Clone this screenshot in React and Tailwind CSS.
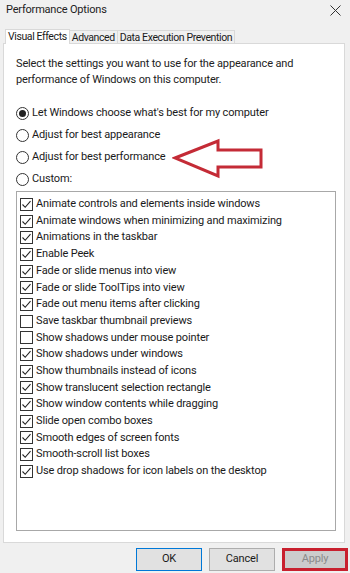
import React from "react";

const effects = [
  ["Animate controls and elements inside windows", true],
  ["Animate windows when minimizing and maximizing", true],
  ["Animations in the taskbar", true],
  ["Enable Peek", true],
  ["Fade or slide menus into view", true],
  ["Fade or slide ToolTips into view", true],
  ["Fade out menu items after clicking", true],
  ["Save taskbar thumbnail previews", false],
  ["Show shadows under mouse pointer", false],
  ["Show shadows under windows", true],
  ["Show thumbnails instead of icons", true],
  ["Show translucent selection rectangle", true],
  ["Show window contents while dragging", true],
  ["Slide open combo boxes", true],
  ["Smooth edges of screen fonts", true],
  ["Smooth-scroll list boxes", true],
  ["Use drop shadows for icon labels on the desktop", true],
];

const radios = [
  ["Let Windows choose what's best for my computer", true],
  ["Adjust for best appearance", false],
  ["Adjust for best performance", false],
  ["Custom:", false],
];

function Radio({ checked }) {
  return (
    <span className="w-[13px] h-[13px] rounded-full border border-[#333] bg-white flex items-center justify-center shrink-0">
      {checked && <span className="w-[7px] h-[7px] rounded-full bg-[#222]" />}
    </span>
  );
}

function Check({ checked }) {
  return (
    <span className="w-[13px] h-[13px] border border-[#333] bg-white flex items-center justify-center shrink-0">
      {checked && (
        <svg width="11" height="11" viewBox="0 0 11 11">
          <path d="M1.5 5.5 L4.2 8.3 L9.5 2.2" fill="none" stroke="#222" strokeWidth="1.1" />
        </svg>
      )}
    </span>
  );
}

export default function App() {
  return (
    <div
      className="relative w-[350px] h-[573px] bg-[#f0f0f0] text-[#1a1a1a] tracking-[-0.15px] overflow-hidden"
      style={{ fontFamily: 'Roboto, "Noto Sans", sans-serif' }}
    >
      {/* title bar */}
      <div className="flex items-center justify-between h-[21px] pl-[6px] pr-[9px]">
        <span className="text-[11px] tracking-[-0.2px] text-[#222]">Performance Options</span>
        <svg width="11" height="11" viewBox="0 0 11 11">
          <path d="M0.5 0.5 L10.5 10.5 M10.5 0.5 L0.5 10.5" stroke="#333" strokeWidth="1" />
        </svg>
      </div>

      {/* tabs */}
      <div className="flex items-end h-[15px] pl-[5px] mt-[7px] text-[10.5px] tracking-[-0.4px]">
        <div className="h-[15px] px-[2px] bg-white border border-b-0 border-[#d9d9d9] leading-[14px] relative z-10 -mb-px">
          Visual Effects
        </div>
        <div className="h-[13px] px-[2px] border border-b-0 border-l-0 border-[#d9d9d9] leading-[13px]">
          Advanced
        </div>
        <div className="h-[13px] px-[2px] border border-b-0 border-l-0 border-[#d9d9d9] leading-[13px]">
          Data Execution Prevention
        </div>
      </div>

      {/* panel */}
      <div className="mx-[3px] w-[342px] h-[500px] bg-white border border-[#d9d9d9] pt-[12px] px-[12px]">
        <p className="text-[11px] leading-[16px] text-[#222]">
          Select the settings you want to use for the appearance and
          <br />
          performance of Windows on this computer.
        </p>

        <div className="mt-[19px] flex flex-col gap-[9px]">
          {radios.map(([label, on]) => (
            <div key={label} className="flex items-center gap-[3px] h-[13px] text-[11px]">
              <Radio checked={on} />
              <span>{label}</span>
            </div>
          ))}
        </div>

        <div className="mt-[5px] w-[320px] h-[340px] border border-[#a8a8a8] pt-[4px] pl-[3px]">
          {effects.map(([label, on]) => (
            <div key={label} className="flex items-center gap-[3px] h-[16.7px] text-[11px]">
              <Check checked={on} />
              <span>{label}</span>
            </div>
          ))}
        </div>
      </div>

      {/* buttons */}
      <div className="flex justify-end gap-[7px] pr-[2px] mt-[5px] text-[11px]">
        <button className="w-[66px] h-[23px] bg-[#e1e1e1] border border-[#0078d7]">OK</button>
        <button className="w-[66px] h-[23px] bg-[#e1e1e1] border border-[#adadad]">Cancel</button>
        <button className="w-[66px] h-[23px] bg-[#cccccc] border-[3px] border-[#c8202e] text-[#8a8a8a]">
          Apply
        </button>
      </div>

      {/* red arrow callout */}
      <svg className="absolute left-[172px] top-[138px]" width="94" height="42" viewBox="0 0 94 42">
        <path
          d="M3 20 L46 3 L46 12 L89 12 L89 29 L46 29 L46 38 Z"
          fill="white"
          stroke="#c42b36"
          strokeWidth="3"
          strokeLinejoin="miter"
        />
      </svg>
    </div>
  );
}
